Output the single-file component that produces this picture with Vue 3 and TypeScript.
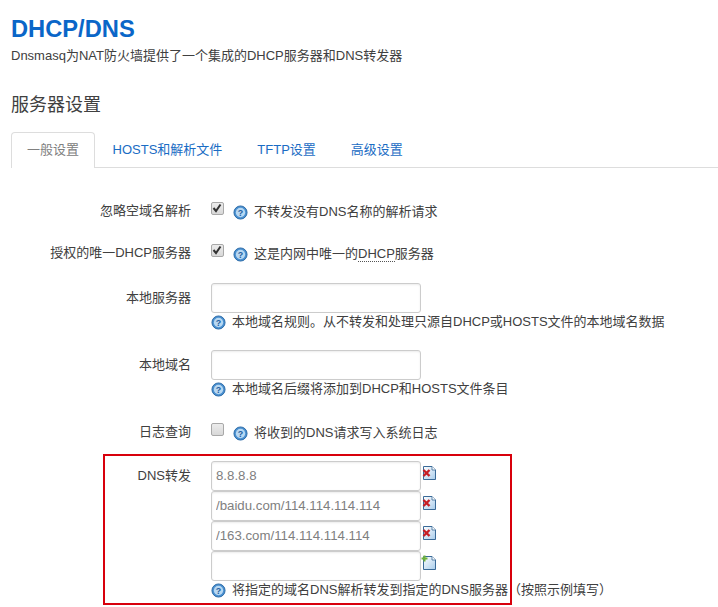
<script setup lang="ts">
interface Row {
  label: string
  kind: 'check' | 'text' | 'list'
  checked?: boolean
  help: string
  values?: string[]
}
const rows: Row[] = [
  { label: '忽略空域名解析', kind: 'check', checked: true, help: '不转发没有DNS名称的解析请求' },
  { label: '授权的唯一DHCP服务器', kind: 'check', checked: true, help: '' },
  { label: '本地服务器', kind: 'text', help: '本地域名规则。从不转发和处理只源自DHCP或HOSTS文件的本地域名数据' },
  { label: '本地域名', kind: 'text', help: '本地域名后缀将添加到DHCP和HOSTS文件条目' },
  { label: '日志查询', kind: 'check', checked: false, help: '将收到的DNS请求写入系统日志' },
  {
    label: 'DNS转发',
    kind: 'list',
    values: ['8.8.8.8', '/baidu.com/114.114.114.114', '/163.com/114.114.114.114', ''],
    help: '将指定的域名DNS解析转发到指定的DNS服务器（按照示例填写）',
  },
]
const tabs = ['一般设置', 'HOSTS和解析文件', 'TFTP设置', '高级设置']
</script>

<template>
  <main class="page">
    <h2 class="title">DHCP/DNS</h2>
    <p class="desc">Dnsmasq为NAT防火墙提供了一个集成的DHCP服务器和DNS转发器</p>
    <h3 class="section">服务器设置</h3>
    <ul class="tabs">
      <li v-for="(t, i) in tabs" :key="t" class="tab" :class="{ active: i === 0 }">{{ t }}</li>
    </ul>
    <section class="form">
      <svg width="0" height="0" class="defs">
        <defs>
          <linearGradient id="docFill" x1="0" y1="0" x2="1" y2="1">
            <stop offset="0" stop-color="#ffffff" />
            <stop offset="1" stop-color="#a9cdec" />
          </linearGradient>
        </defs>
      </svg>
      <div v-for="r in rows" :key="r.label" class="row" :class="'row-' + r.kind">
        <label class="label">{{ r.label }}</label>
        <div class="field">
          <template v-if="r.kind === 'check'">
            <div class="check-line">
              <span class="box" :class="{ on: r.checked }">
                <svg v-if="r.checked" viewBox="0 0 12 12" width="12" height="12">
                  <path d="M2.5 6 L5 9 L9.5 2.5" fill="none" stroke="#333" stroke-width="2" />
                </svg>
              </span>
              <svg class="q q-inline" viewBox="0 0 16 16" width="15" height="15">
                <circle cx="8" cy="8" r="7" fill="#4a90d0" stroke="#2b6aa6" />
                <circle cx="8" cy="8" r="5" fill="#b8d8f2" />
                <text x="8" y="11.4" text-anchor="middle" font-size="9.5" font-weight="700" fill="#1f5f9e" font-family="Liberation Sans, sans-serif">?</text>
              </svg>
              <span v-if="r.help" class="help">{{ r.help }}</span>
              <span v-else class="help">这是内网中唯一的<abbr class="abbr">DHCP</abbr>服务器</span>
            </div>
          </template>
          <template v-else-if="r.kind === 'text'">
            <input class="input" type="text" />
            <div class="help-line">
              <svg class="q" viewBox="0 0 16 16" width="15" height="15">
                <circle cx="8" cy="8" r="7" fill="#4a90d0" stroke="#2b6aa6" />
                <circle cx="8" cy="8" r="5" fill="#b8d8f2" />
                <text x="8" y="11.4" text-anchor="middle" font-size="9.5" font-weight="700" fill="#1f5f9e" font-family="Liberation Sans, sans-serif">?</text>
              </svg>
              <span class="help">{{ r.help }}</span>
            </div>
          </template>
          <template v-else>
            <div v-for="(v, i) in r.values" :key="i" class="list-item">
              <input class="input" type="text" :value="v" />
              <svg class="doc" viewBox="0 0 16 16" width="16" height="16">
                <path d="M2.5 1.5 H11 L14.5 5 V14.5 H2.5 Z" fill="url(#docFill)" stroke="#3a6a98" />
                <path d="M11 1.5 V5 H14.5" fill="#fff" stroke="#3a6a98" stroke-width="0.8" />
                <template v-if="v">
                  <path d="M2.5 5 L8.5 11 M8.5 5 L2.5 11" stroke="#c81e24" stroke-width="2.4" />
                </template>
                <template v-else>
                  <path d="M3.5 0.5 V6.5 M0.5 3.5 H6.5" stroke="#6fb33a" stroke-width="2" />
                </template>
              </svg>
            </div>
            <div class="help-line">
              <svg class="q" viewBox="0 0 16 16" width="15" height="15">
                <circle cx="8" cy="8" r="7" fill="#4a90d0" stroke="#2b6aa6" />
                <circle cx="8" cy="8" r="5" fill="#b8d8f2" />
                <text x="8" y="11.4" text-anchor="middle" font-size="9.5" font-weight="700" fill="#1f5f9e" font-family="Liberation Sans, sans-serif">?</text>
              </svg>
              <span class="help">{{ r.help }}</span>
            </div>
          </template>
        </div>
      </div>
    </section>
    <div class="highlight"></div>
  </main>
</template>

<style>
html, body { margin: 0; background: #fff; overflow: hidden; }
</style>

<style scoped>
.page {
  position: relative;
  width: 718px;
  height: 607px;
  overflow: hidden;
  padding: 15px 0 0 11px;
  box-sizing: border-box;
  font-family: "Liberation Sans", "Noto Sans CJK SC", sans-serif;
  color: #404040;
  font-size: 13px;
}
.title {
  margin: 0;
  font-size: 23.7px;
  line-height: 28px;
  font-weight: 700;
  color: #0a66c8;
}
.desc {
  margin: 4px 0 0;
  font-size: 13px;
  line-height: 18px;
  color: #404040;
}
.section {
  margin: 27px 0 0;
  font-size: 18px;
  line-height: 27px;
  font-weight: 400;
  color: #404040;
}
.tabs {
  display: flex;
  list-style: none;
  margin: 13px 0 0;
  padding: 0;
  border-bottom: 1px solid #ddd;
  height: 35px;
}
.tab {
  padding: 0 16.5px;
  line-height: 34px;
  color: #1a6cc4;
  border: 1px solid transparent;
  border-bottom: 0;
}
.tab.active {
  color: #808080;
  background: #fff;
  border-color: #ddd;
  border-radius: 4px 4px 0 0;
  height: 35px;
  padding: 0 15px;
}
.form {
  padding-top: 34px;
  margin-left: -11px;
}
.defs { position: absolute; }
.row {
  display: grid;
  grid-template-columns: 191px 1fr;
  column-gap: 20px;
}
.label {
  text-align: right;
  font-size: 13px;
  line-height: 18px;
  color: #404040;
}
.row-check { height: 39px; }
.row-check:nth-of-type(1) { height: 42px; }
.row-text { height: 67px; }
.row-text + .row-text { height: 73px; }
.row-text + .row-check { height: 38px; }
.row-check .label { padding-top: 0; }
.row-text .label { padding-top: 6px; }
.row-list .label { padding-top: 6px; }
.check-line {
  display: flex;
  align-items: center;
  height: 18px;
}
.box {
  width: 13px;
  height: 13px;
  box-sizing: border-box;
  border: 1px solid #a8a8a8;
  border-radius: 2px;
  background: linear-gradient(#ececec, #d8d8d8);
  display: flex;
  margin-top: -5px;
}
.box svg { margin: -1px 0 0 -1px; }
.q-inline { margin-left: 9px; margin-top: 2px; }
.check-line .help { margin-left: 6px; margin-top: 1px; }
.input {
  display: block;
  width: 210px;
  height: 30px;
  box-sizing: border-box;
  border: 1px solid #ccc;
  border-radius: 3px;
  padding: 0 4px 2px;
  font: 13.25px "Liberation Sans", sans-serif;
  color: #808080;
  background: #fff;
  box-shadow: inset 0 1px 2px rgba(0, 0, 0, 0.08);
  outline: none;
}
.help-line {
  display: flex;
  align-items: center;
  height: 18px;
}
.q { flex: none; }
.help-line .help { margin-left: 6px; }
.help {
  font-size: 13px;
  line-height: 18px;
  color: #404040;
  white-space: nowrap;
}
.abbr { border-bottom: 1px dotted #555; text-decoration: none; }
.list-item {
  display: flex;
  align-items: flex-start;
}
.doc { margin: 4px 0 0 0; flex: none; }
.highlight {
  position: absolute;
  left: 103px;
  top: 454px;
  width: 409px;
  height: 151px;
  box-sizing: border-box;
  border: 2px solid #d8000c;
  pointer-events: none;
}
</style>
